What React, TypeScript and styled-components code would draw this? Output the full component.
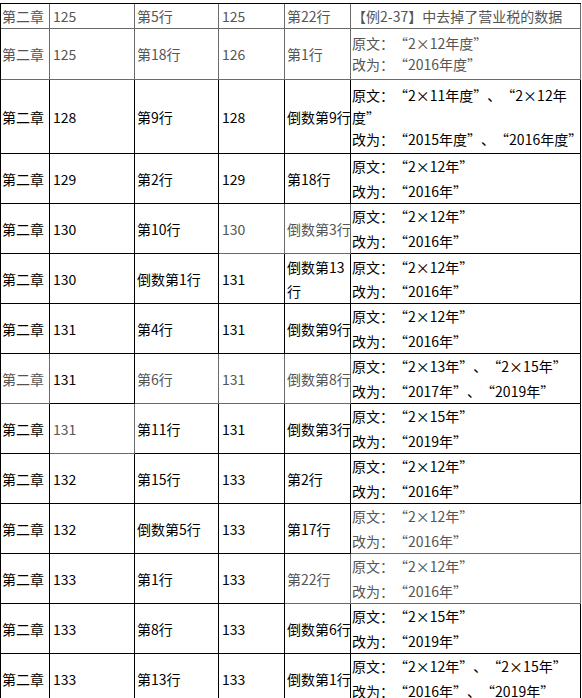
import React from "react";
import styled, { createGlobalStyle } from "styled-components";

const GlobalStyle = createGlobalStyle`
  html, body {
    margin: 0;
    padding: 0;
    background: #ffffff;
  }
  body {
    font-family: "Noto Sans CJK SC", "Noto Sans", sans-serif;
    color: #000;
    overflow: hidden;
  }
`;

const Page = styled.div`
  padding-top: 3px;
  width: 582px;
  height: 698px;
  box-sizing: border-box;
  overflow: hidden;
`;

const Table = styled.div`
  width: 581px;
  border-top: 1px solid #000;
  border-left: 1px solid #000;
  box-sizing: border-box;
`;

const Row = styled.div<{ $h: number }>`
  display: grid;
  grid-template-columns: 49px 85px 84px 66px 66px 230px;
  height: ${(p) => p.$h}px;
`;

const Cell = styled.div<{ $muted?: boolean; $lh: number; $pad?: number }>`
  display: flex;
  flex-direction: column;
  justify-content: center;
  box-sizing: border-box;
  border-right: 1px solid ${(p) => (p.$muted ? "#6a6a6a" : "#000")};
  border-bottom: 1px solid ${(p) => (p.$muted ? "#6a6a6a" : "#000")};
  padding-left: ${(p) => p.$pad ?? 1}px;
  font-size: 14px;
  line-height: ${(p) => p.$lh}px;
  color: ${(p) => (p.$muted ? "#555" : "#000")};
  white-space: nowrap;
  overflow: hidden;
`;

const Line = styled.span`
  display: block;
`;

const Wide = styled.span<{ $align: "left" | "right" | "center" }>`
  display: inline-block;
  width: 14px;
  text-align: ${(p) => p.$align};
`;

type RowData = {
  h: number;
  lh: number;
  cells: [string, string, string, string, string[], string[]];
  muted?: number[];
};

const rows: RowData[] = [
  { h: 25, lh: 22, cells: ["第二章", "125", "第5行", "125", ["第22行"], ["【例2-37】中去掉了营业税的数据"]], muted: [0, 1, 2, 3, 4, 5] },
  { h: 51, lh: 21, cells: ["第二章", "125", "第18行", "126", ["第1行"], ["原文：“2×12年度”", "改为：“2016年度”"]], muted: [0, 1, 2, 3, 4, 5] },
  { h: 74, lh: 22, cells: ["第二章", "128", "第9行", "128", ["倒数第9行"], ["原文：“2×11年度”、“2×12年", "度”", "改为：“2015年度”、“2016年度”"]] },
  { h: 50, lh: 25, cells: ["第二章", "129", "第2行", "129", ["第18行"], ["原文：“2×12年”", "改为：“2016年”"]] },
  { h: 50, lh: 25, cells: ["第二章", "130", "第10行", "130", ["倒数第3行"], ["原文：“2×12年”", "改为：“2016年”"]], muted: [3, 4] },
  { h: 50, lh: 24, cells: ["第二章", "130", "倒数第1行", "131", ["倒数第13", "行"], ["原文：“2×12年”", "改为：“2016年”"]] },
  { h: 50, lh: 25, cells: ["第二章", "131", "第4行", "131", ["倒数第9行"], ["原文：“2×12年”", "改为：“2016年”"]] },
  { h: 50, lh: 25, cells: ["第二章", "131", "第6行", "131", ["倒数第8行"], ["原文：“2×13年”、“2×15年”", "改为：“2017年”、“2019年”"]], muted: [0, 2, 3, 4] },
  { h: 50, lh: 25, cells: ["第二章", "131", "第11行", "131", ["倒数第3行"], ["原文：“2×15年”", "改为：“2019年”"]], muted: [1] },
  { h: 50, lh: 25, cells: ["第二章", "132", "第15行", "133", ["第2行"], ["原文：“2×12年”", "改为：“2016年”"]] },
  { h: 50, lh: 25, cells: ["第二章", "132", "倒数第5行", "133", ["第17行"], ["原文：“2×12年”", "改为：“2016年”"]], muted: [5] },
  { h: 50, lh: 25, cells: ["第二章", "133", "第1行", "133", ["第22行"], ["原文：“2×12年”", "改为：“2016年”"]], muted: [4, 5] },
  { h: 50, lh: 25, cells: ["第二章", "133", "第8行", "133", ["倒数第6行"], ["原文：“2×15年”", "改为：“2019年”"]] },
  { h: 50, lh: 25, cells: ["第二章", "133", "第13行", "133", ["倒数第1行"], ["原文：“2×12年”、“2×15年”", "改为：“2016年”、“2019年”"]] },
];

const pads = [1, 3, 2, 3, 2, 1];

function renderText(s: string) {
  const parts = s.split(/([“”×])/);
  return parts.map((p, i) => {
    if (p === "“") return <Wide key={i} $align="right">{p}</Wide>;
    if (p === "”") return <Wide key={i} $align="left">{p}</Wide>;
    if (p === "×") return <Wide key={i} $align="center">{p}</Wide>;
    return <React.Fragment key={i}>{p}</React.Fragment>;
  });
}

export default function App() {
  return (
    <>
      <GlobalStyle />
      <Page>
        <Table>
          {rows.map((r, ri) => (
            <Row key={ri} $h={r.h}>
              {r.cells.map((c, ci) => {
                const lines = Array.isArray(c) ? c : [c];
                const lh = ci === 5 || lines.length > 1 ? r.lh : 24;
                return (
                  <Cell key={ci} $lh={lh} $pad={pads[ci]} $muted={r.muted?.includes(ci)}>
                    {lines.map((l, li) => (
                      <Line key={li}>{renderText(l)}</Line>
                    ))}
                  </Cell>
                );
              })}
            </Row>
          ))}
        </Table>
      </Page>
    </>
  );
}
